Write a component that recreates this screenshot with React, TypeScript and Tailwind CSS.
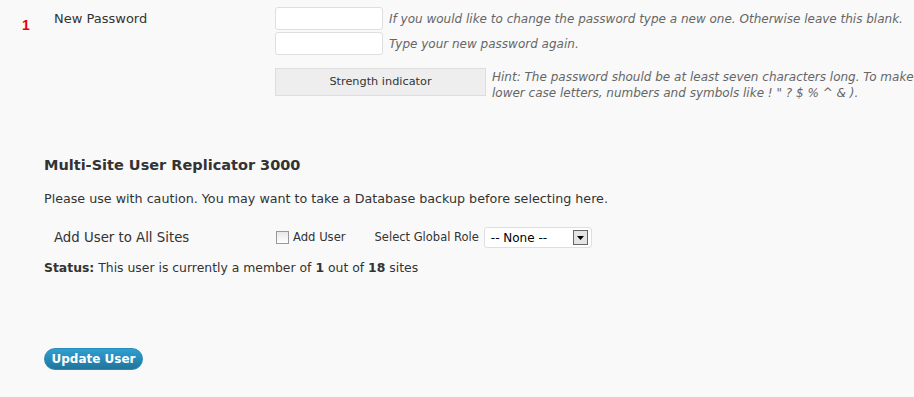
import React from "react";

export default function App() {
  const f = { fontFamily: '"DejaVu Sans", Verdana, sans-serif' };
  return (
    <div className="w-[914px] h-[397px] bg-[#f9f9f9] text-[#333] relative overflow-hidden" style={f}>
      <span className="absolute left-[22px] top-[16px] text-[14px] leading-[18px] font-bold text-[#e00]" style={{ fontFamily: '"Liberation Sans", Arial, sans-serif' }}>1</span>
      <div className="flex pt-[7px]">
        <div className="w-[275px] shrink-0 pl-[54px] pt-[2px] text-[13px] whitespace-nowrap">New Password</div>
        <div className="flex flex-col">
          <div className="flex items-center gap-[6px] h-[23px]">
            <div className="w-[108px] h-[23px] shrink-0 bg-white border border-[#dfdfdf] rounded-[3px]" />
            <span className="text-[12px] italic text-[#666] whitespace-nowrap">If you would like to change the password type a new one. Otherwise leave this blank.</span>
          </div>
          <div className="flex items-center gap-[6px] h-[23px] mt-[2px]">
            <div className="w-[108px] h-[23px] shrink-0 bg-white border border-[#dfdfdf] rounded-[3px]" />
            <span className="text-[12px] italic text-[#666] whitespace-nowrap">Type your new password again.</span>
          </div>
          <div className="flex mt-[13px] gap-[6px]">
            <div className="w-[211px] h-[28px] shrink-0 bg-[#eee] border border-[#ddd] flex items-center justify-center text-[11.3px] text-[#333]">Strength indicator</div>
            <div className="text-[12px] italic text-[#666] leading-[16px] mt-[1px] whitespace-nowrap">
              Hint: The password should be at least seven characters long. To make it stronger, use upper and
              <br />
              lower case letters, numbers and symbols like ! " ? $ % ^ &amp; ).
            </div>
          </div>
        </div>
      </div>
      <div className="pl-[44px] mt-[54px]">
        <h3 className="text-[14.5px] font-bold text-[#333]">Multi-Site User Replicator 3000</h3>
        <p className="text-[12.7px] mt-[12px]">Please use with caution. You may want to take a Database backup before selecting here.</p>
      </div>
      <div className="flex items-center mt-[19px] h-[22px]">
        <div className="w-[276px] shrink-0 pl-[54px] text-[13.3px] whitespace-nowrap">Add User to All Sites</div>
        <div className="w-[13px] h-[13px] shrink-0 border border-[#999] bg-gradient-to-b from-[#e8e8e8] to-[#fff] mr-[4px]" />
        <span className="text-[11.6px]">Add User</span>
        <span className="text-[11.5px] ml-[29px]">Select Global Role</span>
        <div className="ml-[5px] w-[108px] h-[21px] shrink-0 bg-white border border-[#dfdfdf] rounded-[3px] flex items-center justify-between pl-[6px] pr-[3px]">
          <span className="text-[12px] text-[#000]">-- None --</span>
          <div className="w-[15px] h-[15px] border border-[#666] bg-[#e4e4e4] flex items-center justify-center">
            <svg width="7" height="4" viewBox="0 0 7 4"><path d="M0 0h7L3.5 4z" fill="#000" /></svg>
          </div>
        </div>
      </div>
      <p className="pl-[44px] text-[12.4px] mt-[10px]">
        <b>Status:</b> This user is currently a member of <b>1</b> out of <b>18</b> sites
      </p>
      <div className="pl-[44px] mt-[69px]">
        <button className="w-[99px] h-[22px] rounded-full bg-gradient-to-b from-[#2e9fd2] to-[#21759b] border border-[#298cba] text-white text-[12px] font-bold leading-none" style={f}>Update User</button>
      </div>
    </div>
  );
}
